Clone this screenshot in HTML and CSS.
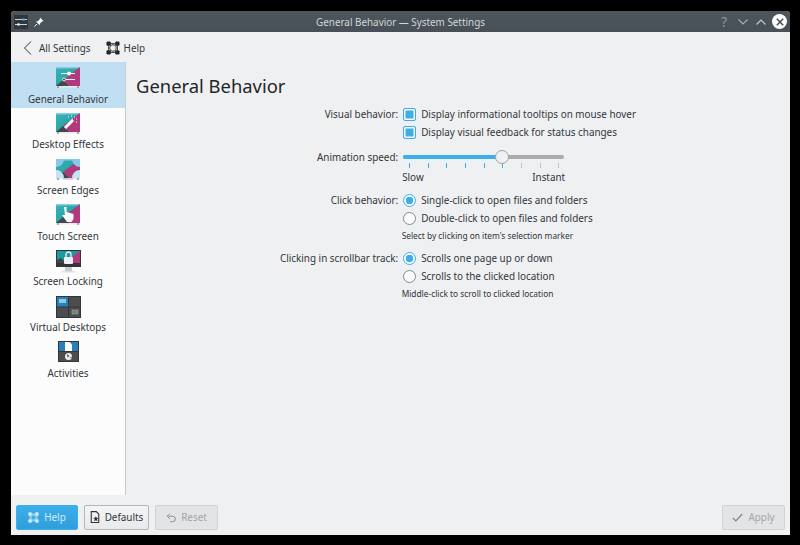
FILE: index.html
```html
<!DOCTYPE html>
<html lang="en">
<head>
<meta charset="utf-8">
<title>General Behavior — System Settings</title>
<link rel="stylesheet" href="styles.css">
</head>
<body>
<svg class="defs" width="0" height="0" aria-hidden="true">
  <defs>
    <linearGradient id="teal" x1="0" y1="0" x2="1" y2="1">
      <stop offset="0" stop-color="#3fb0c0"/>
      <stop offset="1" stop-color="#12a08a"/>
    </linearGradient>
    <g id="wall">
      <rect x="0" y="0" width="24" height="19" fill="url(#teal)"/>
      <rect x="0" y="0" width="24" height="1.500" fill="#7fcfe0"/>
      <polygon points="24,0 24,19 13,19 7,13" fill="#b03a7d"/>
      <polygon points="7,13 13,19 0,19" fill="#41474b"/>
      <rect x="0" y="19" width="24" height="1.500" fill="#e8eaeb"/>
      <rect x="1" y="19.500" width="2" height="1" fill="#666"/>
      <rect x="21" y="19.500" width="2" height="1" fill="#666"/>
    </g>
    <g id="lifering">
      <path d="M3 3h10M3 13h10M3 3v10M13 3v10" stroke="#232629" stroke-width="1" fill="none"/>
      <rect x="0.500" y="0.500" width="5" height="5" rx="1.500" fill="#232629"/>
      <rect x="10.500" y="0.500" width="5" height="5" rx="1.500" fill="#232629"/>
      <rect x="0.500" y="10.500" width="5" height="5" rx="1.500" fill="#232629"/>
      <rect x="10.500" y="10.500" width="5" height="5" rx="1.500" fill="#232629"/>
      <circle cx="8" cy="8" r="3.800" fill="#eff0f1" stroke="#232629" stroke-width="1"/>
    </g>
    <g id="lifering-light" fill="#d5ecfa">
      <path d="M3 3h10M3 13h10M3 3v10M13 3v10" stroke="#d5ecfa" stroke-width="1" fill="none"/>
      <rect x="0.500" y="0.500" width="5" height="5" rx="1.500"/>
      <rect x="10.500" y="0.500" width="5" height="5" rx="1.500"/>
      <rect x="0.500" y="10.500" width="5" height="5" rx="1.500"/>
      <rect x="10.500" y="10.500" width="5" height="5" rx="1.500"/>
      <circle cx="8" cy="8" r="3.800" fill="#3daee9" stroke="#d5ecfa" stroke-width="1"/>
    </g>
  </defs>
</svg>
<div class="window">
  <header class="titlebar">
    <div class="tb-left">
      <span class="app-icon">
        <svg width="12" height="8" viewBox="0 0 12 8"><path d="M0 1.500h12M0 6.500h12" stroke="#d0d5d8" stroke-width="1"/><circle cx="8.500" cy="1.500" r="1.300" fill="#3daee9"/><circle cx="3.500" cy="6.500" r="1.300" fill="#eff0f1"/></svg>
      </span>
      <svg class="pin" width="10" height="10" viewBox="0 0 10 10"><path d="M6 0.500l3.500 3.500-1.500.5-2 2-.3 1.800L2 4.500l1.800-.3 2-2z" fill="#fcfcfc"/><path d="M3 7L.5 9.500" stroke="#fcfcfc" stroke-width="1"/></svg>
    </div>
    <div class="tb-title">General Behavior — System Settings</div>
    <div class="tb-right">
      <span class="tb-help">?</span>
      <svg width="10" height="6" viewBox="0 0 10 6"><path d="M.5.500L5 5l4.500-4.500" fill="none" stroke="#a6adb2" stroke-width="1.200"/></svg>
      <svg width="10" height="6" viewBox="0 0 10 6"><path d="M.5 5.500L5 1l4.500 4.500" fill="none" stroke="#c4c9cc" stroke-width="1.200"/></svg>
      <span class="tb-close">
        <svg width="8" height="8" viewBox="0 0 8 8"><path d="M.8.800l6.400 6.400M7.200.800L.8 7.200" stroke="#475057" stroke-width="1.500"/></svg>
      </span>
    </div>
  </header>

  <nav class="toolbar">
    <button class="tool back">
      <svg width="9" height="14" viewBox="0 0 9 14"><path d="M8 .5L1.500 7 8 13.500" fill="none" stroke="#31363b" stroke-width="1"/></svg>
      <span>All Settings</span>
    </button>
    <button class="tool">
      <svg width="14" height="14" viewBox="0 0 16 16"><use href="#lifering"/></svg>
      <span>Help</span>
    </button>
  </nav>

  <div class="middle">
    <aside class="sidebar">
      <div class="item selected">
        <svg class="ic" width="24" height="21" viewBox="0 0 24 21"><use href="#wall"/><path d="M5 6.500h14M8 12.500h11" stroke="#eff0f1" stroke-width="1"/><circle cx="13" cy="6.500" r="2" fill="#fcfcfc"/><circle cx="8" cy="12.500" r="1.500" fill="#41474b" stroke="#eff0f1"/></svg>
        <span>General Behavior</span>
      </div>
      <div class="item">
        <svg class="ic" width="24" height="21" viewBox="0 0 24 21"><use href="#wall"/><path d="M9 15l8-8" stroke="#fcfcfc" stroke-width="3"/><path d="M12 4h1M15 3h1M18 4h1M20 6h1M16 6h1M20 9h1" stroke="#fcfcfc" stroke-width="1"/></svg>
        <span>Desktop Effects</span>
      </div>
      <div class="item">
        <svg class="ic" width="24" height="21" viewBox="0 0 24 21"><use href="#wall"/><path d="M0 0h8a8 8 0 0 1-8 8zM24 0h-8a8 8 0 0 0 8 8z" fill="#8ac8e8"/><path d="M0 19v-8a8 8 0 0 1 8 8zM24 19v-8a8 8 0 0 0-8 8z" fill="#c5e4f3"/><rect x="7" y="19" width="10" height="1.500" fill="#c8cbcd"/></svg>
        <span>Screen Edges</span>
      </div>
      <div class="item">
        <svg class="ic" width="24" height="21" viewBox="0 0 24 21"><use href="#wall"/><path d="M8 3h2.500v5l7 2v5l-2 3H11L6 11h3z" fill="#fcfcfc"/></svg>
        <span>Touch Screen</span>
      </div>
      <div class="item">
        <svg class="ic" width="25" height="23" viewBox="0 0 25 23"><rect x="0" y="0" width="25" height="17" fill="#31363b"/><rect x="1" y="1" width="23" height="12" fill="#1d99a0"/><polygon points="24,1 24,13 8,13" fill="#b03a7d"/><polygon points="1,13 1,10 5,8 10,13" fill="#3f4549"/><rect x="8" y="7" width="9" height="7" rx="1" fill="#eff0f1"/><path d="M10 7V4.500a2.500 2.500 0 0 1 5 0V7" fill="none" stroke="#eff0f1" stroke-width="1.300"/><rect x="9" y="17" width="7" height="4" fill="#c8cbcd"/><rect x="6" y="21" width="13" height="1.500" fill="#dcdedf"/></svg>
        <span>Screen Locking</span>
      </div>
      <div class="item">
        <svg class="ic" width="25" height="22" viewBox="0 0 25 22"><rect width="25" height="22" fill="#31363b"/><rect x="1" y="1" width="11" height="9.500" fill="#2980b9"/><rect x="13" y="1" width="11" height="9.500" fill="#4d4d4d"/><rect x="1" y="11.500" width="11" height="9.500" fill="#4d4d4d"/><rect x="13" y="11.500" width="11" height="9.500" fill="#4d4d4d"/><rect x="3" y="3" width="7" height="4" fill="#8ac8e8"/><rect x="16" y="14" width="6" height="4" fill="#7a7d7f" stroke="#aaa" stroke-width=".5"/></svg>
        <span>Virtual Desktops</span>
      </div>
      <div class="item">
        <svg class="ic" width="21" height="21" viewBox="0 0 21 21"><rect width="21" height="21" fill="#31363b"/><rect x="1" y="1" width="19" height="9" fill="#2980b9"/><rect x="1" y="11" width="19" height="9" fill="#4d4d4d"/><path d="M7 1h4.500L14 3.500V10H7z" fill="#fcfcfc"/><circle cx="10.500" cy="15.500" r="3.500" fill="#eff0f1"/><path d="M9 13l2.500 2-2 1.500zM12 16.500l1.500-1v2z" fill="#4d4d4d"/></svg>
        <span>Activities</span>
      </div>
    </aside>

    <main class="content">
      <h1>General Behavior</h1>
      <div class="form">
        <div class="lbl">Visual behavior:</div>
        <div class="field"><span class="check"></span>Display informational tooltips on mouse hover</div>
        <div class="field span2"><span class="check"></span>Display visual feedback for status changes</div>

        <div class="lbl lbl-slider">Animation speed:</div>
        <div class="slider-wrap">
          <div class="slider">
            <div class="track"><div class="fill"></div></div>
            <span class="knob"></span>
          </div>
          <div class="ticks">
            <i class="on"></i><i class="on"></i><i class="on"></i><i class="on"></i><i class="on"></i><i class="on"></i><i></i><i></i><i></i>
          </div>
          <div class="ends"><span>Slow</span><span>Instant</span></div>
        </div>

        <div class="lbl gap">Click behavior:</div>
        <div class="field gap"><span class="radio on"></span>Single-click to open files and folders</div>
        <div class="field span2"><span class="radio"></span>Double-click to open files and folders</div>
        <div class="hint span2">Select by clicking on item's selection marker</div>

        <div class="lbl gap2">Clicking in scrollbar track:</div>
        <div class="field gap2"><span class="radio on"></span>Scrolls one page up or down</div>
        <div class="field span2"><span class="radio"></span>Scrolls to the clicked location</div>
        <div class="hint span2">Middle-click to scroll to clicked location</div>
      </div>
    </main>
  </div>

  <footer class="footer">
    <button class="btn primary">
      <svg width="11" height="11" viewBox="0 0 16 16"><use href="#lifering-light"/></svg>
      <span>Help</span>
    </button>
    <button class="btn defaults">
      <svg width="10" height="12" viewBox="0 0 12 14"><path d="M1.500.500h6l3 3v10h-9z" fill="none" stroke="#31363b" stroke-width="1.300"/><path d="M7 6l1 2 2 .3-1.500 1.500.4 2.200-1.900-1-1.900 1 .4-2.200L4 8.300 6 8z" fill="#31363b"/></svg>
      <span>Defaults</span>
    </button>
    <button class="btn disabled">
      <svg width="10" height="11" viewBox="0 0 12 12"><path d="M3 4.500h5a3 3 0 0 1 0 6.500H5" fill="none" stroke="#8a8d8f" stroke-width="1.200"/><path d="M4.500 1.500L1.500 4.500l3 3" fill="none" stroke="#8a8d8f" stroke-width="1.200"/></svg>
      <span>Reset</span>
    </button>
    <div class="spacer"></div>
    <button class="btn disabled apply">
      <svg width="11" height="9" viewBox="0 0 13 10"><path d="M1 5.500L4.500 9 12 1" fill="none" stroke="#7a7d7f" stroke-width="1.400"/></svg>
      <span>Apply</span>
    </button>
  </footer>
</div>
</body>
</html>
```
FILE: styles.css
```css
* { box-sizing: border-box; }
html, body { margin: 0; height: 100%; }
body {
  background: #000;
  padding: 11px 10px 10px 11px;
  font-family: "Noto Sans", sans-serif;
  font-size: 9.9px;
  color: #31363b;
  overflow: hidden;
}
.defs { position: absolute; }
.window {
  height: 524px;
  display: flex;
  flex-direction: column;
  background: #eff0f1;
  border-radius: 4px 4px 0 0;
  overflow: hidden;
}
.titlebar {
  height: 21px;
  flex: none;
  display: grid;
  grid-template-columns: 1fr auto 1fr;
  align-items: center;
  background: linear-gradient(#4e565c, #475057);
  color: #d3d6d8;
}
.tb-left { display: flex; align-items: center; gap: 6px; padding-left: 3px; }
.app-icon {
  width: 14px; height: 14px;
  display: flex; align-items: center; justify-content: center;
  background: #31363b;
}
.tb-title { font-size: 9.9px; }
.tb-right {
  display: flex; align-items: center; justify-content: flex-end;
  gap: 8px; padding-right: 3px;
}
.tb-help { font-size: 13.5px; line-height: 16px; color: #8f979c; margin-right: 3px; }
.tb-close {
  width: 15px; height: 15px; border-radius: 50%;
  background: #fcfcfc;
  display: flex; align-items: center; justify-content: center;
  margin-left: -2px;
}
.toolbar {
  height: 30px;
  flex: none;
  display: flex;
  align-items: center;
  gap: 15px;
  padding: 2px 0 0 12px;
}
.tool {
  display: flex; align-items: center; gap: 4px;
  border: 0; background: none; padding: 0;
  font: inherit; color: inherit;
}
.tool.back { gap: 7px; }
.middle { flex: 1; display: flex; min-height: 0; }
.sidebar {
  width: 115px;
  flex: none;
  background: #fcfcfc;
  border-right: 1px solid #c9cccf;
  display: flex;
  flex-direction: column;
}
.item {
  height: 45.7px;
  flex: none;
  display: flex;
  flex-direction: column;
  align-items: center;
  padding-top: 5.3px;
  position: relative;
}
.item span { position: absolute; top: 29.7px; line-height: 15px; white-space: nowrap; }
.item.selected { background: #c0dff3; }
.content { flex: 1; display: flex; flex-direction: column; min-width: 0; }
h1 {
  margin: 11px 0 0 10px;
  font-size: 18.4px;
  font-weight: 400;
  line-height: 25px;
  color: #232629;
}
.form {
  display: grid;
  grid-template-columns: auto auto;
  justify-content: center;
  column-gap: 4px;
  margin-top: 7px;
}
.lbl { text-align: right; line-height: 18px; }
.field {
  display: flex; align-items: center; gap: 5px;
  height: 18px;
  padding-left: 1px;
  white-space: nowrap;
}
.span2 { grid-column: 2; }
.gap { margin-top: 7px; }
.gap2 { margin-top: 6px; }
.lbl-slider { margin-top: 7px; line-height: 18px; }
.check {
  width: 13px; height: 13px;
  border: 1px solid #3daee9;
  border-radius: 2px;
  flex: none;
  box-shadow: inset 0 0 0 1.500px #fcfcfc;
  background-color: #3daee9;
}
.radio {
  width: 13px; height: 13px;
  border-radius: 50%;
  border: 1px solid #7f8c8d;
  background: #fcfcfc;
  flex: none;
}
.radio.on {
  border-color: #3daee9;
  background: radial-gradient(circle, #3daee9 0 3.500px, #fcfcfc 4px);
}
.hint { font-size: 8.35px; line-height: 12px; margin: 3px 0 0 -0.5px; height: 13px; }
.slider-wrap { width: 163px; margin-top: 7px; }
.slider { position: relative; height: 18px; display: flex; align-items: center; padding: 0 1px; }
.track { width: 161px; height: 4px; border-radius: 2px; background: #a9abad; overflow: hidden; }
.fill { width: 97px; height: 100%; background: #3daee9; }
.knob {
  position: absolute; left: 93px; top: 2px;
  width: 14px; height: 14px; border-radius: 50%;
  background: #eff0f1; border: 1px solid #9ea2a5;
}
.ticks {
  display: flex; justify-content: space-between;
  padding-left: 7px; height: 5px; margin-top: -3px;
  width: 157px;
}
.ticks i { width: 1px; height: 5px; background: #c0c3c5; }
.ticks i.on { background: #3daee9; }
.ends {
  display: flex; justify-content: space-between;
  line-height: 14px; margin-top: 2px;
  width: 163px;
}
.footer {
  height: 40px;
  flex: none;
  display: flex;
  align-items: center;
  gap: 6px;
  padding: 4px 5px 0 5px;
}
.spacer { flex: 1; }
.btn {
  height: 25px;
  width: 65px;
  display: flex; align-items: center; justify-content: center; gap: 5px;
  border: 1px solid #b4b7b9;
  border-radius: 2px;
  background: linear-gradient(#f4f5f5, #e8e9ea);
  font: inherit;
  color: #31363b;
  padding: 0;
}
.btn.primary {
  width: 62px;
  border-color: #3daee9;
  background: linear-gradient(#3daee9, #2e9fdc);
  color: #d5ecfa;
}
.btn.disabled {
  width: 63px;
  background: #e3e4e5;
  border-color: #d0d2d3;
  color: #a2a5a7;
}
```
